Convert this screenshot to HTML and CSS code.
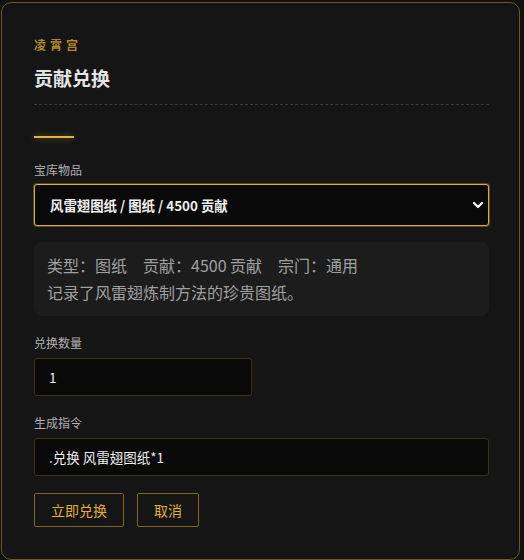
FILE: index.html
```html
<!DOCTYPE html>
<html lang="zh-CN">
<head>
<meta charset="utf-8">
<title>贡献兑换</title>
<link rel="stylesheet" href="styles.css">
</head>
<body>
<div class="card">
  <div class="eyebrow">凌霄宫</div>
  <h1 class="title">贡献兑换</h1>
  <div class="divider"></div>
  <div class="accent"></div>

  <label class="label first">宝库物品</label>
  <div class="select-wrap">
    <select class="select">
      <option>风雷翅图纸 / 图纸 / 4500 贡献</option>
    </select>
    <svg class="chevron" width="12" height="8" viewBox="0 0 12 8"><path d="M2 2 L6 6 L10 2" fill="none" stroke="#ffffff" stroke-width="2.2" stroke-linecap="round" stroke-linejoin="round"/></svg>
  </div>

  <div class="info">
    <div>类型：图纸　贡献：4500 贡献　宗门：通用</div>
    <div>记录了风雷翅炼制方法的珍贵图纸。</div>
  </div>

  <label class="label">兑换数量</label>
  <input class="input short" type="text" value="1">

  <label class="label">生成指令</label>
  <input class="input" type="text" value=".兑换 风雷翅图纸*1">

  <div class="actions">
    <button class="btn">立即兑换</button>
    <button class="btn">取消</button>
  </div>
</div>
</body>
</html>
```
FILE: styles.css
```css
html, body {
  margin: 0;
  padding: 0;
  background: #121212;
}
body {
  font-family: "Noto Sans CJK SC", "Noto Sans", "Liberation Sans", sans-serif;
  color: #ddd;
}
.card {
  margin: 2px 4px 0 1px;
  height: 522px;
  border: 1px solid #6b5822;
  border-radius: 10px;
  background: #151515;
  padding: 34px 30px 0 32px;
}
.eyebrow {
  font-size: 12px;
  line-height: 16px;
  letter-spacing: 4px;
  color: #b08a24;
  font-weight: 700;
}
.title {
  margin: 12px 0 0;
  font-size: 19px;
  line-height: 26px;
  font-weight: 700;
  color: #e4e4e4;
}
.divider {
  margin-top: 13px;
  border-top: 1px dashed #3b3a33;
}
.accent {
  margin-top: 31px;
  width: 40px;
  height: 2px;
  background: #e2b23a;
  box-shadow: 0 0 6px rgba(226, 178, 58, 0.45);
}
.label {
  display: block;
  margin-top: 18px;
  font-size: 12px;
  line-height: 18px;
  color: #b0b0b0;
}
.label.first {
  margin-top: 23px;
}
.select-wrap {
  position: relative;
  margin-top: 5px;
}
.select {
  display: block;
  width: 100%;
  height: 42px;
  box-sizing: border-box;
  appearance: none;
  -webkit-appearance: none;
  background: #090909;
  border: 1px solid #e0ad2e;
  box-shadow: 0 0 0 1px rgba(224, 173, 46, 0.35);
  border-radius: 3px;
  color: #f0f0f0;
  font-family: inherit;
  font-size: 13.4px;
  font-weight: 700;
  padding: 0 30px 0 15px;
  outline: none;
}
.chevron {
  position: absolute;
  right: 5px;
  top: 17px;
}
.info {
  margin-top: 16px;
  background: #1c1c1c;
  border-radius: 8px;
  padding: 10px 13px;
  font-size: 16px;
  line-height: 27px;
  color: #a0a0a0;
}
.input {
  display: block;
  margin-top: 6px;
  width: 100%;
  height: 38px;
  box-sizing: border-box;
  background: #090909;
  border: 1px solid #3a3118;
  border-radius: 3px;
  color: #eeeeee;
  font-family: inherit;
  font-size: 13.5px;
  padding: 0 14px;
  outline: none;
}
.input.short {
  width: 218px;
}
.actions {
  display: flex;
  gap: 13px;
  margin-top: 17px;
}
.btn {
  height: 34px;
  box-sizing: border-box;
  padding: 0 16px;
  background: transparent;
  border: 1px solid #806626;
  border-radius: 2px;
  color: #e2b02c;
  font-family: inherit;
  font-size: 14px;
  cursor: pointer;
}
```
